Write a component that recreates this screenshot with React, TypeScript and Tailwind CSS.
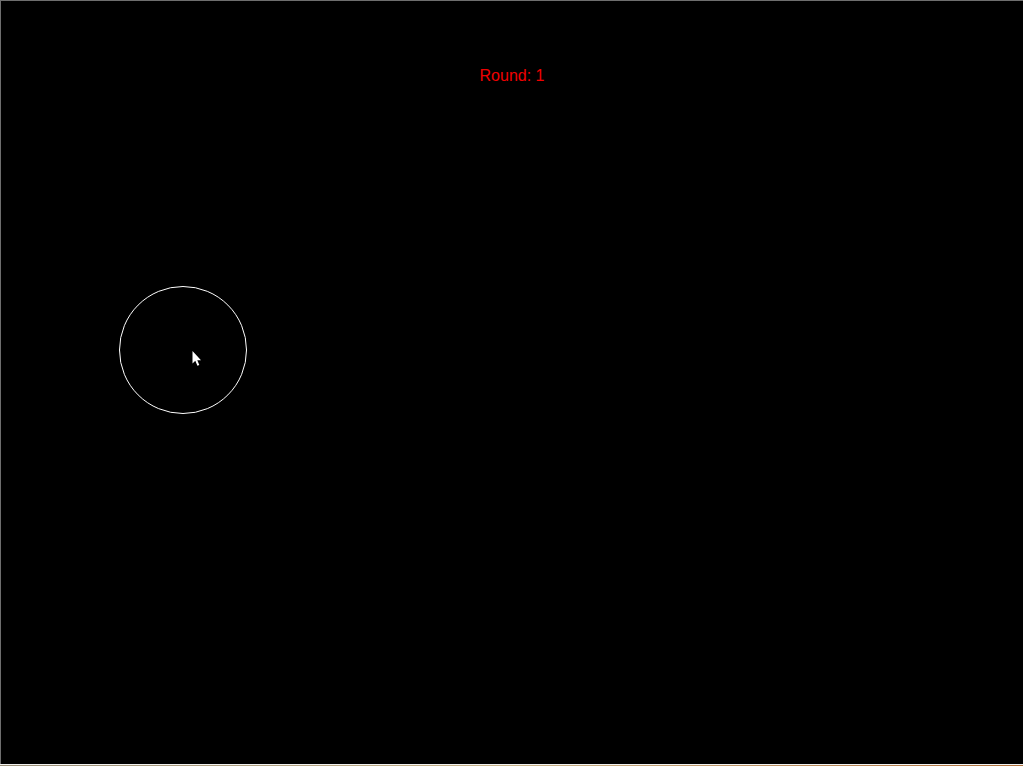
import React from 'react'

export default function App() {
    return (
        <div className="w-[1023px] h-[766px] flex flex-col bg-black overflow-hidden" style={{ fontFamily: '"Liberation Sans", Arial, sans-serif' }}>
            {/* game canvas */}
            <div className="relative flex-1 border-t border-l border-[#6e6e6e] bg-black">
                <div className="flex justify-center pt-[67px]">
                    <p className="text-[16px] leading-none text-[#f00000]">Round: 1</p>
                </div>

                {/* target circle */}
                <div className="absolute left-[118px] top-[285px] w-[128px] h-[128px] rounded-full border border-white"></div>

                {/* mouse pointer */}
                <svg className="absolute left-[191px] top-[350px]" width="11" height="18" viewBox="0 0 11 18">
                    <path d="M0.5 0 L0.5 12.5 L3.3 9.8 L5.4 14.8 L7.3 14 L5.3 9.3 L9 9.3 Z" fill="#fff" />
                </svg>
            </div>

            {/* taskbar edge */}
            <div className="h-px bg-[#f2f2f0]"></div>
            <div className="h-px bg-gradient-to-r from-[#9a8f78] via-[#c9b48a] to-[#b0703a]"></div>
        </div>
    )
}
